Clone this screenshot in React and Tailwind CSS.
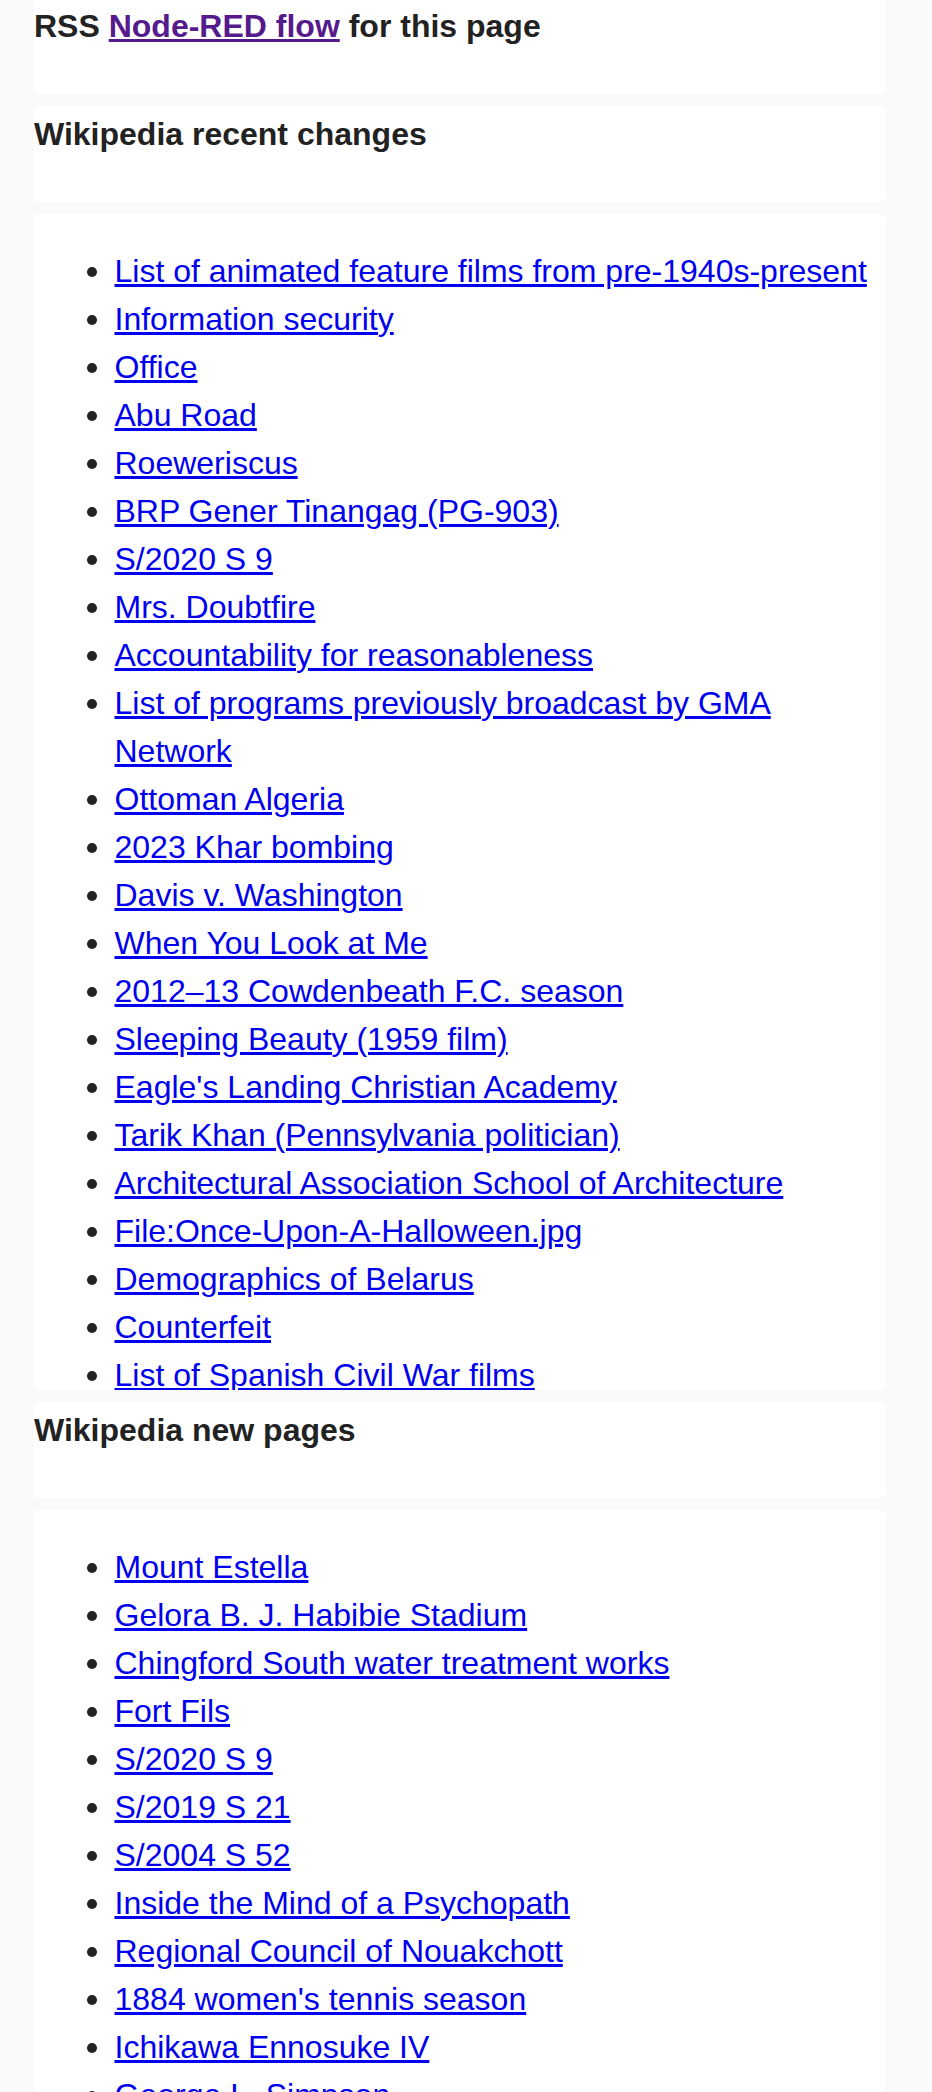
const recentChanges = [
  'List of animated feature films from pre-1940s-present',
  'Information security',
  'Office',
  'Abu Road',
  'Roeweriscus',
  'BRP Gener Tinangag (PG-903)',
  'S/2020 S 9',
  'Mrs. Doubtfire',
  'Accountability for reasonableness',
  'List of programs previously broadcast by GMA Network',
  'Ottoman Algeria',
  '2023 Khar bombing',
  'Davis v. Washington',
  'When You Look at Me',
  '2012–13 Cowdenbeath F.C. season',
  'Sleeping Beauty (1959 film)',
  "Eagle's Landing Christian Academy",
  'Tarik Khan (Pennsylvania politician)',
  'Architectural Association School of Architecture',
  'File:Once-Upon-A-Halloween.jpg',
  'Demographics of Belarus',
  'Counterfeit',
  'List of Spanish Civil War films'
];

const newPages = [
  'Mount Estella',
  'Gelora B. J. Habibie Stadium',
  'Chingford South water treatment works',
  'Fort Fils',
  'S/2020 S 9',
  'S/2019 S 21',
  'S/2004 S 52',
  'Inside the Mind of a Psychopath',
  'Regional Council of Nouakchott',
  "1884 women's tennis season",
  'Ichikawa Ennosuke IV',
  'George L. Simpson'
];

// 패널 제목 (한 줄짜리 카드)
function TitleCard({ title }) {
  return (
    <div className="h-[95.5px] shrink-0 bg-white rounded-[4px] pt-[4px] overflow-hidden">
      <h2 className="font-bold">{title}</h2>
    </div>
  );
}

// 링크 목록 카드 (고정 높이, 넘치면 잘림)
function ListCard({ items, height }) {
  return (
    <div className={`${height} shrink-0 bg-white rounded-[4px] pt-[32.5px] overflow-hidden`}>
      <ul className="pl-[52.5px] pr-[8px]">
        {items.map((item, i) => (
          <li key={i} className="flex items-start">
            <span className="w-[10px] h-[10px] mt-[20.5px] mr-[18px] shrink-0 rounded-full bg-[#222]" />
            <a href="#" className="text-[#0000ee] underline">
              {item}
            </a>
          </li>
        ))}
      </ul>
    </div>
  );
}

export default function App() {
  return (
    <div className="h-[2092px] overflow-hidden bg-[#fafafa] font-['Liberation_Sans',Arial,sans-serif] text-[32px] leading-[48px] text-[#222]">
      <div className="ml-[34px] w-[851px] flex flex-col gap-[12.5px]">
        {/* RSS */}
        <div className="h-[93.5px] shrink-0 bg-white rounded-b-[4px] pt-[1.5px]">
          <p className="font-bold">
            RSS{' '}
            <a href="#" className="text-[#551a8b] underline">
              Node-RED flow
            </a>{' '}
            for this page
          </p>
        </div>

        <TitleCard title="Wikipedia recent changes" />
        <ListCard items={recentChanges} height="h-[1175.5px]" />

        <TitleCard title="Wikipedia new pages" />
        <ListCard items={newPages} height="h-[700px]" />
      </div>
    </div>
  );
}
